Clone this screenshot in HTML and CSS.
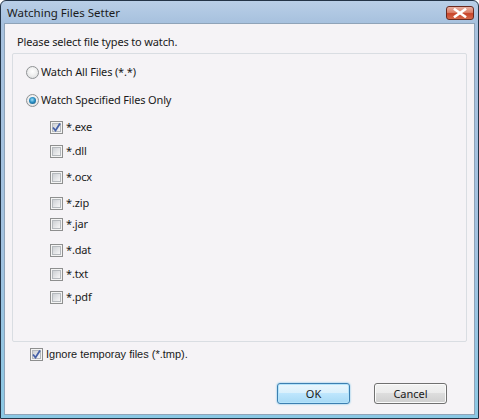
FILE: index.html
```html
<!DOCTYPE html>
<html>
<head>
<meta charset="utf-8">
<link rel="stylesheet" href="styles.css">
</head>
<body>
<div class="window">
  <div class="titlebar">
    <span class="title">Watching Files Setter</span>
    <div class="close">
      <svg width="14" height="10" viewBox="0 0 14 10"><path d="M2 1.5 L12 8.5 M12 1.5 L2 8.5" stroke="#fff" stroke-width="2.6" stroke-linecap="square"/></svg>
    </div>
  </div>
  <div class="client">
    <div class="prompt">Please select file types to watch.</div>
    <div class="group">
      <label class="row radio-row r1"><span class="radio"></span><span>Watch All Files (*.*)</span></label>
      <label class="row radio-row r2"><span class="radio on"><span class="dot"></span></span><span>Watch Specified Files Only</span></label>
      <label class="row cb-row g12"><span class="cb on"><svg width="9" height="9" viewBox="0 0 9 9"><path d="M1 4.5 L3.5 7.5 L8 0.5" fill="none" stroke="#4661a8" stroke-width="1.8"/></svg></span><span>*.exe</span></label>
      <label class="row cb-row g8"><span class="cb"></span><span>*.dll</span></label>
      <label class="row cb-row g10"><span class="cb"></span><span>*.ocx</span></label>
      <label class="row cb-row g10"><span class="cb"></span><span>*.zip</span></label>
      <label class="row cb-row g5"><span class="cb"></span><span>*.jar</span></label>
      <label class="row cb-row g10"><span class="cb"></span><span>*.dat</span></label>
      <label class="row cb-row g8"><span class="cb"></span><span>*.txt</span></label>
      <label class="row cb-row g7"><span class="cb"></span><span>*.pdf</span></label>
    </div>
    <label class="row ignore-row"><span class="cb on"><svg width="9" height="9" viewBox="0 0 9 9"><path d="M1 4.5 L3.5 7.5 L8 0.5" fill="none" stroke="#4661a8" stroke-width="1.8"/></svg></span><span class="tahoma">Ignore temporay files (*.tmp).</span></label>
    <div class="buttons">
      <button class="btn default">OK</button>
      <button class="btn">Cancel</button>
    </div>
  </div>
</div>
</body>
</html>
```
FILE: styles.css
```css
html, body {
  margin: 0;
  padding: 0;
  width: 479px;
  height: 419px;
  overflow: hidden;
  background: #ffffff;
}
body {
  font-family: "Noto Sans", "Liberation Sans", sans-serif;
  font-size: 11px;
  letter-spacing: -0.15px;
  color: #1a1a1a;
}
.window {
  box-sizing: border-box;
  width: 479px;
  height: 419px;
  border: 1px solid #233447;
  border-radius: 6px 6px 0 0;
  background: linear-gradient(#b9cfe7 0px, #a7c1de 22px, #a2c2e0 60%, #8bc8e4 100%);
  display: flex;
  flex-direction: column;
  padding: 0 3px 3px 3px;
}
.titlebar {
  height: 22px;
  display: flex;
  align-items: center;
  justify-content: space-between;
  padding-left: 3px;
  flex: none;
}
.title {
  font-size: 11.5px;
  letter-spacing: 0;
  color: #1b1b1b;
}
.close {
  width: 26px;
  height: 12px;
  margin-right: 1px;
  margin-top: 2px;
  border: 1px solid #6a2a20;
  border-radius: 3px;
  background: linear-gradient(#e9b0a2 0%, #dc8069 45%, #c8442a 55%, #d66a4c 100%);
  display: flex;
  align-items: center;
  justify-content: center;
}
.client {
  flex: 1;
  background: #f5f3f6;
  border: 1px solid #8fa3b8;
  display: flex;
  flex-direction: column;
  box-sizing: border-box;
}
.prompt {
  margin: 10px 0 0 12px;
  height: 16px;
  line-height: 16px;
}
.group {
  margin: 3px 7px 0 7px;
  height: 289px;
  box-sizing: border-box;
  border: 1px solid #d9dde2;
  border-radius: 2px;
  padding-left: 13px;
  display: flex;
  flex-direction: column;
}
.row {
  display: flex;
  align-items: center;
  height: 16px;
  line-height: 16px;
}
.r1 { margin-top: 10px; }
.r2 { margin-top: 12px; }
.cb-row { padding-left: 24px; }
.g12 { margin-top: 11px; }
.g8 { margin-top: 8px; }
.g10 { margin-top: 10px; }
.g5 { margin-top: 5px; }
.g7 { margin-top: 7px; }
.radio {
  width: 13px;
  height: 13px;
  box-sizing: border-box;
  border-radius: 50%;
  border: 1px solid #8f9294;
  background: radial-gradient(circle at 50% 40%, #ffffff 0%, #f0f0f0 45%, #d6d8da 100%);
  margin-right: 2px;
  display: flex;
  align-items: center;
  justify-content: center;
  flex: none;
}
.radio .dot {
  width: 7px;
  height: 7px;
  border-radius: 50%;
  background: radial-gradient(circle at 45% 40%, #9ee0fa 0%, #2a8fc4 45%, #12496f 100%);
}
.cb {
  width: 13px;
  height: 13px;
  box-sizing: border-box;
  border: 1px solid #8e8f8f;
  background: #f4f4f4;
  padding: 1px;
  margin-right: 3px;
  display: flex;
  align-items: center;
  justify-content: center;
  flex: none;
  position: relative;
}
.cb::before {
  content: "";
  position: absolute;
  left: 1px; top: 1px; right: 1px; bottom: 1px;
  border: 1px solid #b5b9bd;
  background: linear-gradient(135deg, #cdd0d4 0%, #e6e7e9 60%, #f6f6f6 100%);
}
.cb svg { position: relative; }
.ignore-row {
  margin: 4px 0 0 25px;
}
.tahoma {
  font-family: "Liberation Sans", sans-serif;
  font-size: 11px;
  letter-spacing: 0;
}
.buttons {
  display: flex;
  justify-content: flex-end;
  gap: 24px;
  margin: 21px 27px 0 0;
}
.btn {
  width: 73px;
  height: 21px;
  box-sizing: border-box;
  border: 1px solid #707070;
  border-radius: 3px;
  background: linear-gradient(#f2f2f2 0%, #ebebeb 50%, #dddddd 50%, #cfcfcf 100%);
  font-family: "Noto Sans", "Liberation Sans", sans-serif;
  font-size: 11px;
  color: #1a1a1a;
  padding: 0;
  line-height: 18px;
  box-shadow: inset 0 0 0 1px #fbfbfb;
}
.btn.default {
  border-color: #3c7fb1;
  background: linear-gradient(#eaf6fd 0%, #d9f0fc 50%, #bee6fd 50%, #a7d9f5 100%);
  box-shadow: inset 0 0 0 1px #b5e4fb, 0 0 2px #5bb7e6;
}
```
